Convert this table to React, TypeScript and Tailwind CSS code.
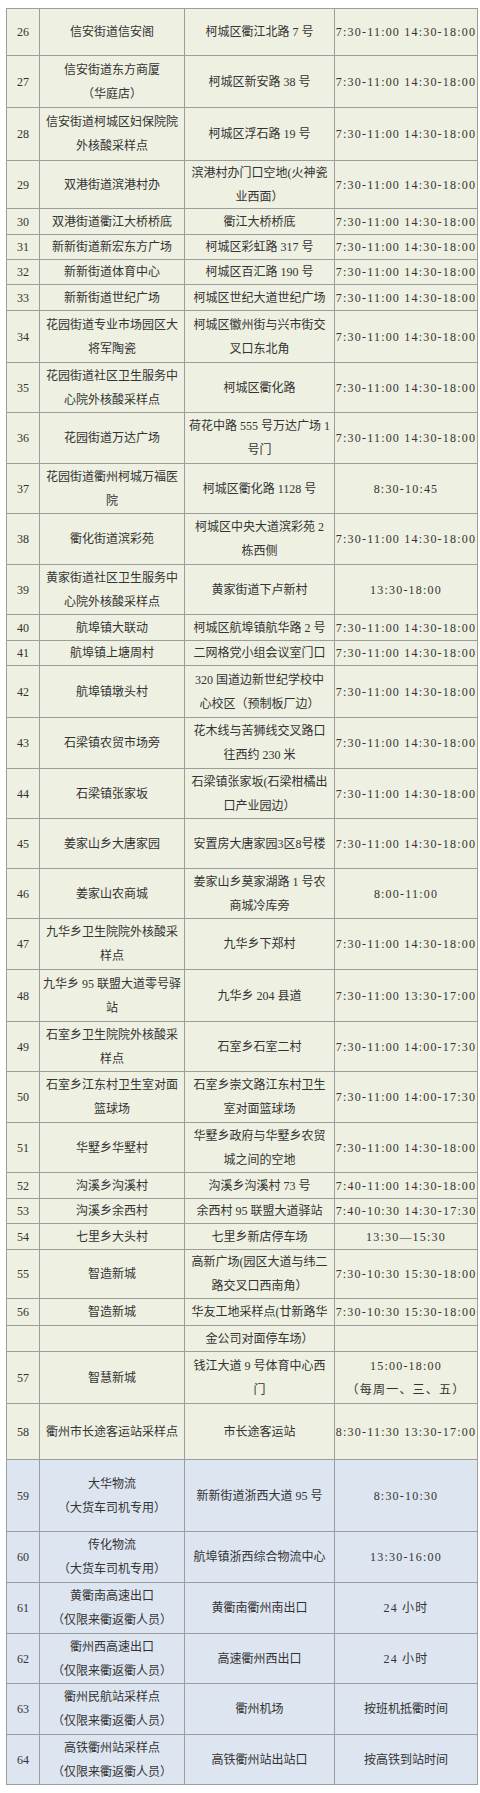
import React from "react";

type Row = {
  n: string;
  name: string;
  addr: string;
  time: string;
  h: string;
  blue?: boolean;
};

const T1 = "7:30-11:00 14:30-18:00";

const rows: Row[] = [
  { n: "26", name: "信安街道信安阁", addr: "柯城区衢江北路 7 号", time: T1, h: "h-[47px]" },
  { n: "27", name: "信安街道东方商厦\n（华庭店）", addr: "柯城区新安路 38 号", time: T1, h: "h-[52px]" },
  { n: "28", name: "信安街道柯城区妇保院院\n外核酸采样点", addr: "柯城区浮石路 19 号", time: T1, h: "h-[53px]" },
  { n: "29", name: "双港街道滨港村办", addr: "滨港村办门口空地(火神瓷\n业西面）", time: T1, h: "h-[48px]" },
  { n: "30", name: "双港街道衢江大桥桥底", addr: "衢江大桥桥底", time: T1, h: "h-[26px]" },
  { n: "31", name: "新新街道新宏东方广场", addr: "柯城区彩虹路 317 号", time: T1, h: "h-[25px]" },
  { n: "32", name: "新新街道体育中心", addr: "柯城区百汇路 190 号", time: T1, h: "h-[25px]" },
  { n: "33", name: "新新街道世纪广场", addr: "柯城区世纪大道世纪广场", time: T1, h: "h-[26px]" },
  { n: "34", name: "花园街道专业市场园区大\n将军陶瓷", addr: "柯城区徽州街与兴市街交\n叉口东北角", time: T1, h: "h-[52px]" },
  { n: "35", name: "花园街道社区卫生服务中\n心院外核酸采样点", addr: "柯城区衢化路", time: T1, h: "h-[50px]" },
  { n: "36", name: "花园街道万达广场", addr: "荷花中路 555 号万达广场 1\n号门", time: T1, h: "h-[51px]" },
  { n: "37", name: "花园街道衢州柯城万福医\n院", addr: "柯城区衢化路 1128 号", time: "8:30-10:45", h: "h-[50px]" },
  { n: "38", name: "衢化街道滨彩苑", addr: "柯城区中央大道滨彩苑 2\n栋西侧", time: T1, h: "h-[51px]" },
  { n: "39", name: "黄家街道社区卫生服务中\n心院外核酸采样点", addr: "黄家街道下卢新村", time: "13:30-18:00", h: "h-[50px]" },
  { n: "40", name: "航埠镇大联动", addr: "柯城区航埠镇航华路 2 号", time: T1, h: "h-[26px]" },
  { n: "41", name: "航埠镇上塘周村", addr: "二网格党小组会议室门口", time: T1, h: "h-[25px]" },
  { n: "42", name: "航埠镇墩头村", addr: "320 国道边新世纪学校中\n心校区（预制板厂边）", time: T1, h: "h-[52px]" },
  { n: "43", name: "石梁镇农贸市场旁", addr: "花木线与苦狮线交叉路口\n往西约 230 米", time: T1, h: "h-[51px]" },
  { n: "44", name: "石梁镇张家坂", addr: "石梁镇张家坂(石梁柑橘出\n口产业园边）", time: T1, h: "h-[50px]" },
  { n: "45", name: "姜家山乡大唐家园", addr: "安置房大唐家园3区8号楼", time: T1, h: "h-[50px]" },
  { n: "46", name: "姜家山农商城", addr: "姜家山乡莫家湖路 1 号农\n商城冷库旁", time: "8:00-11:00", h: "h-[50px]" },
  { n: "47", name: "九华乡卫生院院外核酸采\n样点", addr: "九华乡下郑村", time: T1, h: "h-[51px]" },
  { n: "48", name: "九华乡 95 联盟大道零号驿\n站", addr: "九华乡 204 县道", time: "7:30-11:00 13:30-17:00", h: "h-[52px]" },
  { n: "49", name: "石室乡卫生院院外核酸采\n样点", addr: "石室乡石室二村", time: "7:30-11:00 14:00-17:30", h: "h-[50px]" },
  { n: "50", name: "石室乡江东村卫生室对面\n篮球场", addr: "石室乡崇文路江东村卫生\n室对面篮球场", time: "7:30-11:00 14:00-17:30", h: "h-[51px]" },
  { n: "51", name: "华墅乡华墅村", addr: "华墅乡政府与华墅乡农贸\n城之间的空地", time: T1, h: "h-[50px]" },
  { n: "52", name: "沟溪乡沟溪村", addr: "沟溪乡沟溪村 73 号", time: "7:40-11:00 14:30-18:00", h: "h-[26px]" },
  { n: "53", name: "沟溪乡余西村", addr: "余西村 95 联盟大道驿站", time: "7:40-10:30 14:30-17:30", h: "h-[25px]" },
  { n: "54", name: "七里乡大头村", addr: "七里乡新店停车场", time: "13:30—15:30", h: "h-[26px]" },
  { n: "55", name: "智造新城", addr: "高新广场(园区大道与纬二\n路交叉口西南角）", time: "7:30-10:30 15:30-18:00", h: "h-[49px]" },
  { n: "56", name: "智造新城", addr: "华友工地采样点(廿新路华", time: "7:30-10:30 15:30-18:00", h: "h-[27px]" },
  { n: "", name: "", addr: "金公司对面停车场）", time: "", h: "h-[26px]" },
  { n: "57", name: "智慧新城", addr: "钱江大道 9 号体育中心西\n门", time: "15:00-18:00\n（每周一、三、五）", h: "h-[52px]" },
  { n: "58", name: "衢州市长途客运站采样点", addr: "市长途客运站", time: "8:30-11:30 13:30-17:00", h: "h-[56px]" },
  { n: "59", name: "大华物流\n（大货车司机专用）", addr: "新新街道浙西大道 95 号", time: "8:30-10:30", h: "h-[72px]", blue: true },
  { n: "60", name: "传化物流\n（大货车司机专用）", addr: "航埠镇浙西综合物流中心", time: "13:30-16:00", h: "h-[51px]", blue: true },
  { n: "61", name: "黄衢南高速出口\n（仅限来衢返衢人员）", addr: "黄衢南衢州南出口", time: "24 小时", h: "h-[51px]", blue: true },
  { n: "62", name: "衢州西高速出口\n（仅限来衢返衢人员）", addr: "高速衢州西出口", time: "24 小时", h: "h-[50px]", blue: true },
  { n: "63", name: "衢州民航站采样点\n（仅限来衢返衢人员）", addr: "衢州机场", time: "按班机抵衢时间", h: "h-[51px]", blue: true },
  { n: "64", name: "高铁衢州站采样点\n（仅限来衢返衢人员）", addr: "高铁衢州站出站口", time: "按高铁到站时间", h: "h-[50px]", blue: true },
];

const cell =
  "flex items-center justify-center text-center whitespace-pre border-r border-[#9c9c9c] leading-[24px] overflow-hidden";

export default function App() {
  return (
    <div className="bg-white w-[480px] min-h-[1793px] pt-[8px] pl-[6px]">
      <div
        className="w-[472px] border-t border-l border-[#9c9c9c] text-[12px] text-[#333333]"
        style={{ fontFamily: '"Liberation Serif", "Noto Sans CJK SC", serif' }}
      >
        {rows.map((r, i) => {
          const isTime = /^[0-9]/.test(r.time);
          return (
            <div
              key={i}
              className={`grid grid-cols-[33px_145px_150px_143px] border-b border-[#9c9c9c] ${r.h} ${
                r.blue ? "bg-[#dde5f0]" : "bg-[#eef0e1]"
              }`}
            >
              <div className={cell}>{r.n}</div>
              <div className={cell}>{r.name}</div>
              <div className={cell}>{r.addr}</div>
              <div className={`${cell} ${isTime ? "tracking-[1.2px]" : ""}`}>{r.time}</div>
            </div>
          );
        })}
      </div>
    </div>
  );
}
